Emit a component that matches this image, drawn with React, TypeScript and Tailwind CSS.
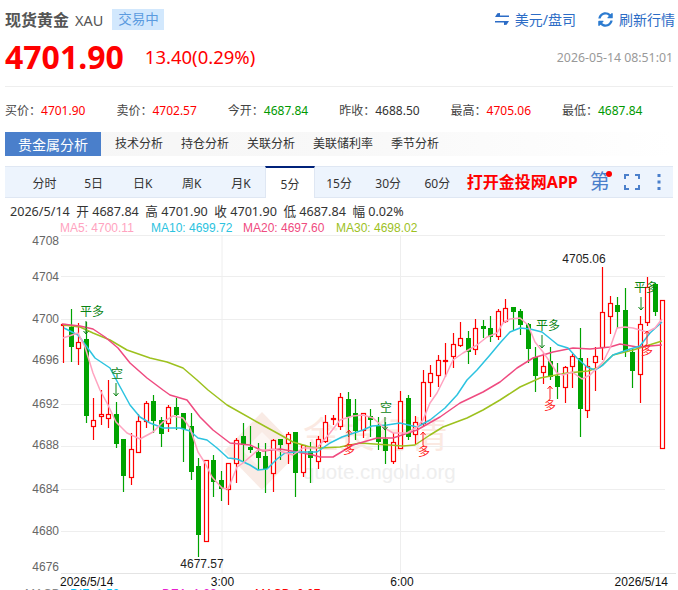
import React from "react";
import { FaSyncAlt } from "react-icons/fa";

const UI = "'Noto Sans','Noto Sans CJK SC',sans-serif";
const ARIAL = "'Liberation Sans','Noto Sans CJK SC',sans-serif";

// [color, wickTop, wickBottom, bodyTop, bodyBottom]
type C = [0 | 1, number, number, number, number];
const candles: C[] = [
  [1,324,363,324,325],[0,309,362,327,347],[1,323,365,342,348],[0,322,423,339,416],[1,398,440,420,426],
  [1,390,425,414,416],[1,380,428,414,418],[0,402,448,414,444],[0,439,492,439,476],[1,433,485,449,477],
  [1,414,453,421,452],[1,401,428,403,421],[0,395,433,401,421],[0,417,447,420,434],[1,405,432,407,423],
  [0,398,430,407,415],[0,413,462,413,429],[0,413,480,426,472],[0,458,557,466,535],[1,460,541,460,541],
  [0,455,497,460,482],[0,471,501,480,489],[1,463,505,463,489],[1,438,483,440,463],[0,423,462,436,445],
  [0,426,453,447,450],[0,443,470,452,458],[0,443,493,456,469],[1,439,492,440,473],[0,439,460,439,445],
  [1,432,464,434,443],[0,432,497,432,473],[1,445,477,445,472],[0,442,483,451,458],[1,436,469,439,461],
  [1,415,443,422,441],[1,415,425,418,419],[1,393,430,397,426],[0,392,437,399,417],[0,399,440,413,431],
  [1,413,438,413,430],[0,409,437,416,420],[0,417,450,425,442],[0,422,464,439,451],[1,433,464,442,461],
  [1,391,448,401,448],[0,395,440,398,437],[1,416,444,422,434],[1,370,427,382,423],[1,365,397,373,382],
  [1,355,387,360,375],[1,343,377,360,361],[1,333,368,344,356],[1,322,347,338,345],[0,331,364,338,352],
  [1,319,355,328,349],[0,320,338,326,329],[0,316,342,328,337],[1,309,340,311,336],[1,299,323,308,321],
  [0,307,330,307,312],[0,309,335,311,325],[0,323,363,324,349],[0,347,392,357,376],[1,353,384,366,372],
  [0,347,380,361,377],[0,363,399,376,387],[1,366,403,367,387],[1,354,388,356,366],[0,328,437,358,409],
  [1,358,418,366,410],[1,347,391,356,362],[1,267,360,312,347],[1,296,334,303,316],[0,297,328,305,312],
  [0,288,357,310,351],[0,348,388,352,371],[1,316,403,324,374],[1,277,326,287,322],[0,283,316,284,312],
  [1,300,448,300,448],
];

const ma5 = "63,338 78,333 85,347 93,373 100,390 108,405 116,422 127,433 140,439 153,432 163,422 173,416 183,418 190,428 198,452 205,463 212,477 222,488 228,489 233,477 237,467 243,463 258,450 267,450 273,449 283,452 293,455 303,448 317,448 330,433 340,420 353,416 363,415 373,418 383,427 393,433 407,433 417,427 423,420 430,403 437,393 447,373 453,360 463,353 477,345 487,337 497,333 503,323 510,319 520,318 528,325 535,342 543,352 550,362 557,373 563,375 572,372 582,379 590,375 595,370 603,362 610,348 617,328 625,327 633,328 647,332 655,328 662,319";
const ma10 = "64,328 78,335 87,347 95,358 110,368 118,383 130,405 140,417 150,423 163,428 180,428 190,431 198,438 207,440 217,448 228,458 237,459 250,465 258,470 267,469 277,459 285,453 297,452 317,452 330,443 342,437 363,430 372,426 387,425 400,423 417,427 430,420 445,408 457,395 467,380 477,370 490,355 500,343 510,332 520,328 530,329 542,332 558,345 568,348 577,358 587,367 595,370 603,365 613,355 627,350 640,346 650,333 662,322";
const ma20 = "62,324 80,326 93,329 105,337 118,348 130,363 147,378 163,390 170,395 187,400 200,417 213,430 230,443 250,445 263,451 280,449 297,452 313,455 320,457 333,457 353,445 377,438 393,438 417,430 440,417 460,403 483,392 500,382 517,368 533,358 553,352 573,348 590,349 610,347 620,344 637,347 662,345";
const ma30 = "63,325 80,327 93,333 110,340 127,350 150,358 167,362 183,368 197,380 208,390 227,405 257,422 277,433 293,442 310,447 320,448 340,447 360,443 403,446 415,445 430,435 443,427 467,418 483,410 500,400 520,387 540,378 567,373 588,371 600,367 613,355 633,350 662,341";

const gridY = [235.5, 276.5, 319.5, 361.5, 404.5, 446.5, 489.5, 531.5];
const yLabels: [string, number][] = [["4708",245],["4704",281],["4700",323],["4696",364],["4692",408],["4688",449],["4684",493],["4680",535],["4676",571]];
const stats: [string, string, string][] = [
  ["买价", "4701.90", "text-[#ff0000]"],
  ["卖价", "4702.57", "text-[#ff0000]"],
  ["今开", "4687.84", "text-[#009900]"],
  ["昨收", "4688.50", "text-[#333333]"],
  ["最高", "4705.06", "text-[#ff0000]"],
  ["最低", "4687.84", "text-[#009900]"],
];
const periods = ["分时", "5日", "日K", "周K", "月K", "5分", "15分", "30分", "60分"];
const tabs = ["技术分析", "持仓分析", "关联分析", "美联储利率", "季节分析"];

function Signal({ x, y, label, dir, tx }: { x: number; y: number; label: string; dir: "up" | "down"; tx: number }) {
  const col = dir === "down" ? "#0b8414" : "#ff1a1a";
  return (
    <g>
      {dir === "down" ? (
        <>
          <text x={tx} y={y - 6} fontSize="12" fill={col} textAnchor="middle" fontFamily="'Noto Sans CJK SC',sans-serif">{label}</text>
          <path d={`M${x} ${y - 1}V${y + 12}M${x - 2.5} ${y + 9}L${x} ${y + 12}L${x + 2.5} ${y + 9}`} stroke={col} fill="none" />
        </>
      ) : (
        <>
          <path d={`M${x} ${y + 13}V${y}M${x - 2.5} ${y + 3}L${x} ${y}L${x + 2.5} ${y + 3}`} stroke={col} fill="none" />
          <text x={tx} y={y + 24} fontSize="12" fill={col} textAnchor="middle" fontFamily="'Noto Sans CJK SC',sans-serif">{label}</text>
        </>
      )}
    </g>
  );
}

function Chart() {
  return (
    <svg width="678" height="357" viewBox="0 233 678 357" className="block">
      {/* watermark */}
      <path d="M262 412L300 451L262 490L224 451Z" fill="#f9ebe5" />
      <path d="M262 432L281 451L262 470L243 451Z" fill="#fdf6f3" />
      <text x="303" y="448" fontSize="36" fill="#fbe9e2" fontFamily="'Noto Sans CJK SC',sans-serif">金投行情</text>
      <text x="303" y="479" fontSize="20.5" fill="#eeeeee" fontFamily={ARIAL}>quote.cngold.org</text>

      {gridY.map((y) => (
        <line key={y} x1="61" x2="665" y1={y} y2={y} stroke="#eeeeee" />
      ))}
      <line x1="222" x2="222" y1="235" y2="573" stroke="#eeeeee" />
      <line x1="400.5" x2="400.5" y1="235" y2="573" stroke="#eeeeee" />
      <line x1="61" x2="676" y1="573.5" y2="573.5" stroke="#e4e4e4" />

      {candles.map(([r, wt, wb, bt, bb], i) => {
        const px = Math.round(63.3 + 7.4875 * i);
        const col = r ? "#ff0000" : "#00a300";
        return (
          <g key={i}>
            <line x1={px + 0.5} x2={px + 0.5} y1={wt} y2={wb} stroke={col} strokeWidth="1.2" />
            {r ? (
              <rect x={px - 1.5} y={bt + 0.5} width="4" height={Math.max(bb - bt, 0.8)} fill="#ffffff" stroke={col} strokeWidth="1.2" />
            ) : (
              <rect x={px - 2} y={bt} width="5" height={bb - bt} fill={col} />
            )}
          </g>
        );
      })}

      <polyline points={ma30} fill="none" stroke="#9dc11e" strokeWidth="1.5" strokeLinejoin="round" />
      <polyline points={ma20} fill="none" stroke="#ef4b80" strokeWidth="1.5" strokeLinejoin="round" />
      <polyline points={ma10} fill="none" stroke="#2cc3e0" strokeWidth="1.5" strokeLinejoin="round" />
      <polyline points={ma5} fill="none" stroke="#ffa3c0" strokeWidth="1.5" strokeLinejoin="round" />

      <Signal x={86} y={322} label="平多" dir="down" tx={92} />
      <Signal x={116} y={384} label="空" dir="down" tx={117} />
      <Signal x={385} y={418} label="空" dir="down" tx={386} />
      <Signal x={542} y={336} label="平多" dir="down" tx={548} />
      <Signal x={641} y={298} label="平多" dir="down" tx={646} />
      <Signal x={349} y={430} label="多" dir="up" tx={349} />
      <Signal x={423} y={432} label="多" dir="up" tx={424} />
      <Signal x={550} y={386} label="多" dir="up" tx={550} />
      <Signal x={647} y={331} label="多" dir="up" tx={647} />

      <g fontFamily={ARIAL} fontSize="12">
        {yLabels.map(([t, y]) => (
          <text key={t} x="59" y={y} fill="#666666" textAnchor="end">{t}</text>
        ))}
        <text x="584" y="263" fill="#222222" textAnchor="middle">4705.06</text>
        <text x="202" y="568" fill="#222222" textAnchor="middle">4677.57</text>
        <text x="60" y="586" fill="#111111">2026/5/14</text>
        <text x="222.5" y="586" fill="#111111" textAnchor="middle">3:00</text>
        <text x="402" y="586" fill="#111111" textAnchor="middle">6:00</text>
        <text x="668" y="586" fill="#111111" textAnchor="end">2026/5/14</text>
        <text x="25" y="598" fill="#888888">MACD</text>
        <text x="70" y="598" fill="#00c8ff">DIF: 1.59</text>
        <text x="162" y="598" fill="#e81fd0">DEA: 1.28</text>
        <text x="255" y="598" fill="#ff0000">MACD: 0.07</text>
      </g>
    </svg>
  );
}

export default function App() {
  return (
    <div className="w-[678px] h-[590px] overflow-hidden bg-white" style={{ fontFamily: UI }}>
      {/* title */}
      <div className="h-[30px] pt-2 flex items-center pl-[5px] pr-[3px]">
        <span className="pt-[2px] text-[16px] font-bold text-[#555555] leading-[22px]">现货黄金</span>
        <span className="pt-[2px] ml-[6px] text-[14.5px] text-[#555555] leading-[22px]">XAU</span>
        <span className="ml-[9px] w-[52px] h-[21px] bg-[#d2e8fd] text-[#5b9bdf] text-[13.5px] flex items-center justify-center">交易中</span>
        <div className="ml-auto flex items-center text-[#2c6cc6] text-[14px]">
          <svg width="15" height="12" viewBox="0 0 15 12" className="mr-[5px]">
            <path d="M0 4H14V2.4H5V0L2.4 .2 0 4Z" fill="#2c6cc6" />
            <path d="M14 8H0V9.6H9V12L11.6 11.8 14 8Z" fill="#2c6cc6" />
          </svg>
          <span>美元/盘司</span>
          <FaSyncAlt className="ml-[22px] mr-[6px] text-[#2c7bd0]" size={15} />
          <span>刷新行情</span>
        </div>
      </div>
      {/* price */}
      <div className="h-[48px] mx-[5px] flex items-center pt-[5px]">
        <span className="text-[32px] font-bold text-[#ff0000] leading-[40px]">4701.90</span>
        <span className="ml-[21px] text-[18.5px] text-[#ff0000]">13.40(0.29%)</span>
        <span className="ml-auto text-[12.3px] text-[#999999] pt-[4px]">2026-05-14 08:51:01</span>
      </div>
      <div className="mx-[5px] mt-[8px] h-px bg-[#eeeeee]" />
      {/* stats */}
      <div className="h-[45px] pl-[5px] flex items-center pt-[3px] text-[12px] text-[#444444]">
        {stats.map(([k, v, c]) => (
          <div key={k} className="w-[111.4px] whitespace-nowrap">
            {k}：<span className={c}>{v}</span>
          </div>
        ))}
      </div>
      {/* tabs */}
      <div className="mx-[5px] h-[24px] flex items-center bg-gradient-to-r from-[#f6f6f6] via-[#f8f8f8] to-white">
        <div className="w-[96px] h-[24px] bg-[#4a7fcb] text-white text-[14px] flex items-center justify-center">贵金属分析</div>
        <div className="ml-[14px] flex gap-[18px] text-[12px] text-[#333333]">
          {tabs.map((t) => (
            <span key={t}>{t}</span>
          ))}
        </div>
      </div>
      {/* periods */}
      <div className="mx-[5px] mt-[10px] h-[32px] bg-[#edf4fd] border-y border-[#dfe7f3] flex items-stretch pl-[15px] relative">
        {periods.map((p, i) => (
          <div
            key={p}
            className={
              i === 5
                ? "w-[49.1px] -mb-px bg-white border-t-2 border-x border-x-[#dfe7f3] border-t-[#00227a] -mt-px text-[12px] text-[#333333] flex items-center justify-center pt-[3px]"
                : "w-[49.1px] text-[12px] text-[#333333] flex items-center justify-center pt-[3px]"
            }
          >
            {p}
          </div>
        ))}
        <span className="ml-[5px] text-[16px] font-bold text-[#ff0000] self-center whitespace-nowrap">打开金投网APP</span>
        <div className="ml-[12px] self-center relative text-[20px] text-[#4a7fcb] leading-[24px]">
          第
          <span className="absolute -right-[2px] top-[1px] w-[6px] h-[6px] rounded-full bg-[#ff0000]" />
        </div>
        <svg width="16" height="16" viewBox="0 0 16 16" className="self-center ml-[14px]" fill="none" stroke="#4a7fcb" strokeWidth="2">
          <path d="M1 5V1H5M11 1H15V5M15 11V15H11M5 15H1V11" />
        </svg>
        <svg width="4" height="16" viewBox="0 0 4 16" className="self-center ml-[17px]" fill="#4a7fcb">
          <rect x=".5" y="0" width="3" height="3" />
          <rect x=".5" y="6.5" width="3" height="3" />
          <rect x=".5" y="13" width="3" height="3" />
        </svg>
      </div>
      {/* info */}
      <div className="h-[35px] pl-[10px] pt-[5px] text-[12.6px] text-[#333333]">
        <div className="h-[18px] leading-[18px] whitespace-nowrap">
          2026/5/14&nbsp; 开 4687.84&nbsp; 高 4701.90&nbsp; 收 4701.90&nbsp; 低 4687.84&nbsp; 幅 0.02%
        </div>
        <div className="h-[15px] leading-[15px] flex text-[12px] -ml-[10px] whitespace-nowrap" style={{ fontFamily: ARIAL }}>
          <span className="ml-[60px] w-[91px] text-[#ffa3c0]">MA5: 4700.11</span>
          <span className="w-[92px] text-[#2cc3e0]">MA10: 4699.72</span>
          <span className="w-[93px] text-[#ef4b80]">MA20: 4697.60</span>
          <span className="text-[#9dc11e]">MA30: 4698.02</span>
        </div>
      </div>
      <Chart />
    </div>
  );
}
